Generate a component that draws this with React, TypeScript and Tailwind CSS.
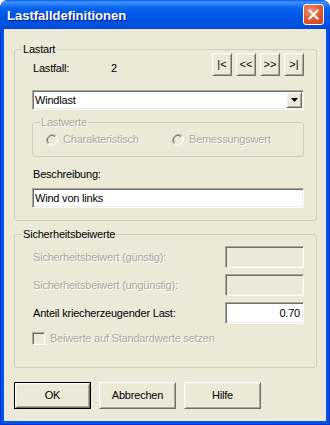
import type { ReactNode } from 'react';

const FONT = "font-['Liberation_Sans',Arial,sans-serif]";
const DIS = 'text-[#ACA899] [text-shadow:1px_1px_0_#fff]';
const SUNKEN =
  'border border-t-[#ACA899] border-l-[#ACA899] border-b-white border-r-white shadow-[inset_1px_1px_0_#716F64,inset_-1px_-1px_0_#F1EFE2]';
const RAISED =
  'border border-t-white border-l-white border-b-[#716F64] border-r-[#716F64] shadow-[inset_1px_1px_0_#F1EFE2,inset_-1px_-1px_0_#ACA899]';

function Group({
  label,
  disabled,
  className,
  children,
}: {
  label: string;
  disabled?: boolean;
  className?: string;
  children: ReactNode;
}) {
  return (
    <div className={`rounded-[3px] border border-[#D0D0BF] ${className ?? ''}`}>
      <div
        className={`-mt-[7px] ml-[7px] w-fit bg-[#ECE9D8] px-[1px] leading-[13px] ${
          disabled ? DIS : 'text-black'
        }`}
      >
        {label}
      </div>
      {children}
    </div>
  );
}

function NavButton({ label }: { label: string }) {
  return (
    <div
      className={`flex h-[23px] w-[20px] items-center justify-center bg-[#ECE9D8] text-[11px] font-light leading-none tracking-[0px] ${RAISED}`}
    >
      {label}
    </div>
  );
}

function Radio({ label }: { label: string }) {
  return (
    <div className="flex items-center gap-[5px]">
      <svg width="12" height="12" viewBox="0 0 12 12">
        <path d="M10.2 1.8 A6 6 0 0 0 1.8 10.2" fill="none" stroke="#ACA899" strokeWidth="1" />
        <path d="M1.8 10.2 A6 6 0 0 0 10.2 1.8" fill="none" stroke="#ffffff" strokeWidth="1" />
        <circle cx="6" cy="6" r="4.5" fill="#ECE9D8" />
        <path d="M9.2 2.8 A4.5 4.5 0 0 0 2.8 9.2" fill="none" stroke="#716F64" strokeWidth="1" />
        <path d="M2.8 9.2 A4.5 4.5 0 0 0 9.2 2.8" fill="none" stroke="#F1EFE2" strokeWidth="1" />
      </svg>
      <span className={`leading-[13px] ${DIS}`}>{label}</span>
    </div>
  );
}

function FactorRow({ label, value, disabled }: { label: string; value?: string; disabled?: boolean }) {
  return (
    <div className="flex h-[22px] items-center justify-between">
      <span className={`ml-[1px] leading-[13px] ${disabled ? DIS : 'text-black'}`}>{label}</span>
      <div
        className={`flex h-[22px] w-[79px] items-center justify-end pr-[3px] leading-[13px] ${SUNKEN} ${
          disabled ? 'bg-[#ECE9D8]' : 'bg-white'
        }`}
      >
        {value}
      </div>
    </div>
  );
}

function DialogButton({ label, isDefault }: { label: string; isDefault?: boolean }) {
  return (
    <div className={`h-[27px] w-[77px] ${isDefault ? 'border border-black' : ''}`}>
      <div className={`flex h-full w-full items-center justify-center bg-[#ECE9D8] leading-[13px] ${RAISED}`}>
        {label}
      </div>
    </div>
  );
}

export default function App() {
  return (
    <div
      className={`flex h-[425px] w-[330px] flex-col overflow-hidden rounded-t-[8px] bg-[#0831D9] text-[11px] tracking-[-0.2px] text-black ${FONT}`}
    >
      {/* title bar */}
      <div className="flex h-[29px] shrink-0 items-center justify-between rounded-t-[8px] bg-[linear-gradient(to_bottom,#0A5DE8_0px,#3D95FF_2px,#2B83F8_4px,#0A64EE_8px,#0058E6_14px,#0054E3_20px,#0050DC_26px,#0047CF_29px)] pl-[7px] pr-[6px]">
        <span className="pt-[1px] text-[13px] font-bold leading-[15px] tracking-normal text-white [text-shadow:1px_1px_0_#0A1883]">
          Lastfalldefinitionen
        </span>
        <div className="flex h-[21px] w-[21px] items-center justify-center rounded-[3px] border border-white bg-[radial-gradient(circle_at_35%_30%,#F0906E_0%,#E0562F_55%,#C8401E_100%)]">
          <svg width="11" height="11" viewBox="0 0 11 11">
            <path d="M1.5 1.5 L9.5 9.5 M9.5 1.5 L1.5 9.5" stroke="#fff" strokeWidth="2.2" strokeLinecap="square" />
          </svg>
        </div>
      </div>

      {/* client area */}
      <div className="mx-[1px] mb-[1px] flex flex-1 flex-col border-x-[3px] border-b-[3px] border-[#0054E3] bg-[#ECE9D8]">
        <Group label="Lastart" className="ml-[10px] mt-[20px] w-[303px]">
          <div className="-mt-[3px] pl-[17px] pr-[12px]">
            <div className="flex h-[23px] items-start justify-between">
              <div className="flex pt-[9px] leading-[13px]">
                <span className="ml-[1px] w-[78px]">Lastfall:</span>
                <span>2</span>
              </div>
              <div className="flex gap-[4px]">
                <NavButton label="|<" />
                <NavButton label="<<" />
                <NavButton label=">>" />
                <NavButton label=">|" />
              </div>
            </div>

            <div className={`mt-[14px] flex h-[20px] items-stretch bg-white ${SUNKEN}`}>
              <span className="flex flex-1 items-center pl-[2px] leading-[13px]">Windlast</span>
              <div className={`my-[1px] mr-[1px] flex w-[16px] items-center justify-center bg-[#ECE9D8] ${RAISED}`}>
                <svg width="7" height="4" viewBox="0 0 7 4">
                  <path d="M0 0 H7 L3.5 4 Z" fill="#000" />
                </svg>
              </div>
            </div>

            <Group label="Lastwerte" disabled className="mt-[12px] w-[272px]">
              <div className="mt-[4px] flex pb-[10px] pl-[13px]">
                <div className="w-[126px]">
                  <Radio label="Charakteristisch" />
                </div>
                <Radio label="Bemessungswert" />
              </div>
            </Group>

            <div className="ml-[1px] mt-[11px] leading-[13px]">Beschreibung:</div>
            <div className={`mt-[7px] flex h-[20px] items-center bg-white pl-[2px] leading-[13px] ${SUNKEN}`}>
              Wind von links
            </div>
            <div className="h-[12px]" />
          </div>
        </Group>

        <Group label="Sicherheitsbeiwerte" className="ml-[10px] mt-[13px] w-[303px]">
          <div className="mt-[5px] flex flex-col gap-[6px] pl-[17px] pr-[12px]">
            <FactorRow label="Sicherheitsbeiwert (günstig):" disabled />
            <FactorRow label="Sicherheitsbeiwert (ungünstig):" disabled />
            <FactorRow label="Anteil kriecherzeugender Last:" value="0.70" />
          </div>
          <div className="mt-[8px] flex items-center gap-[5px] pb-[22px] pl-[17px]">
            <div className={`h-[13px] w-[13px] bg-[#ECE9D8] ${SUNKEN}`} />
            <span className={`leading-[13px] ${DIS}`}>Beiwerte auf Standardwerte setzen</span>
          </div>
        </Group>

        <div className="ml-[10px] mt-[14px] flex gap-[8px]">
          <DialogButton label="OK" isDefault />
          <DialogButton label="Abbrechen" />
          <DialogButton label="Hilfe" />
        </div>
      </div>
    </div>
  );
}
